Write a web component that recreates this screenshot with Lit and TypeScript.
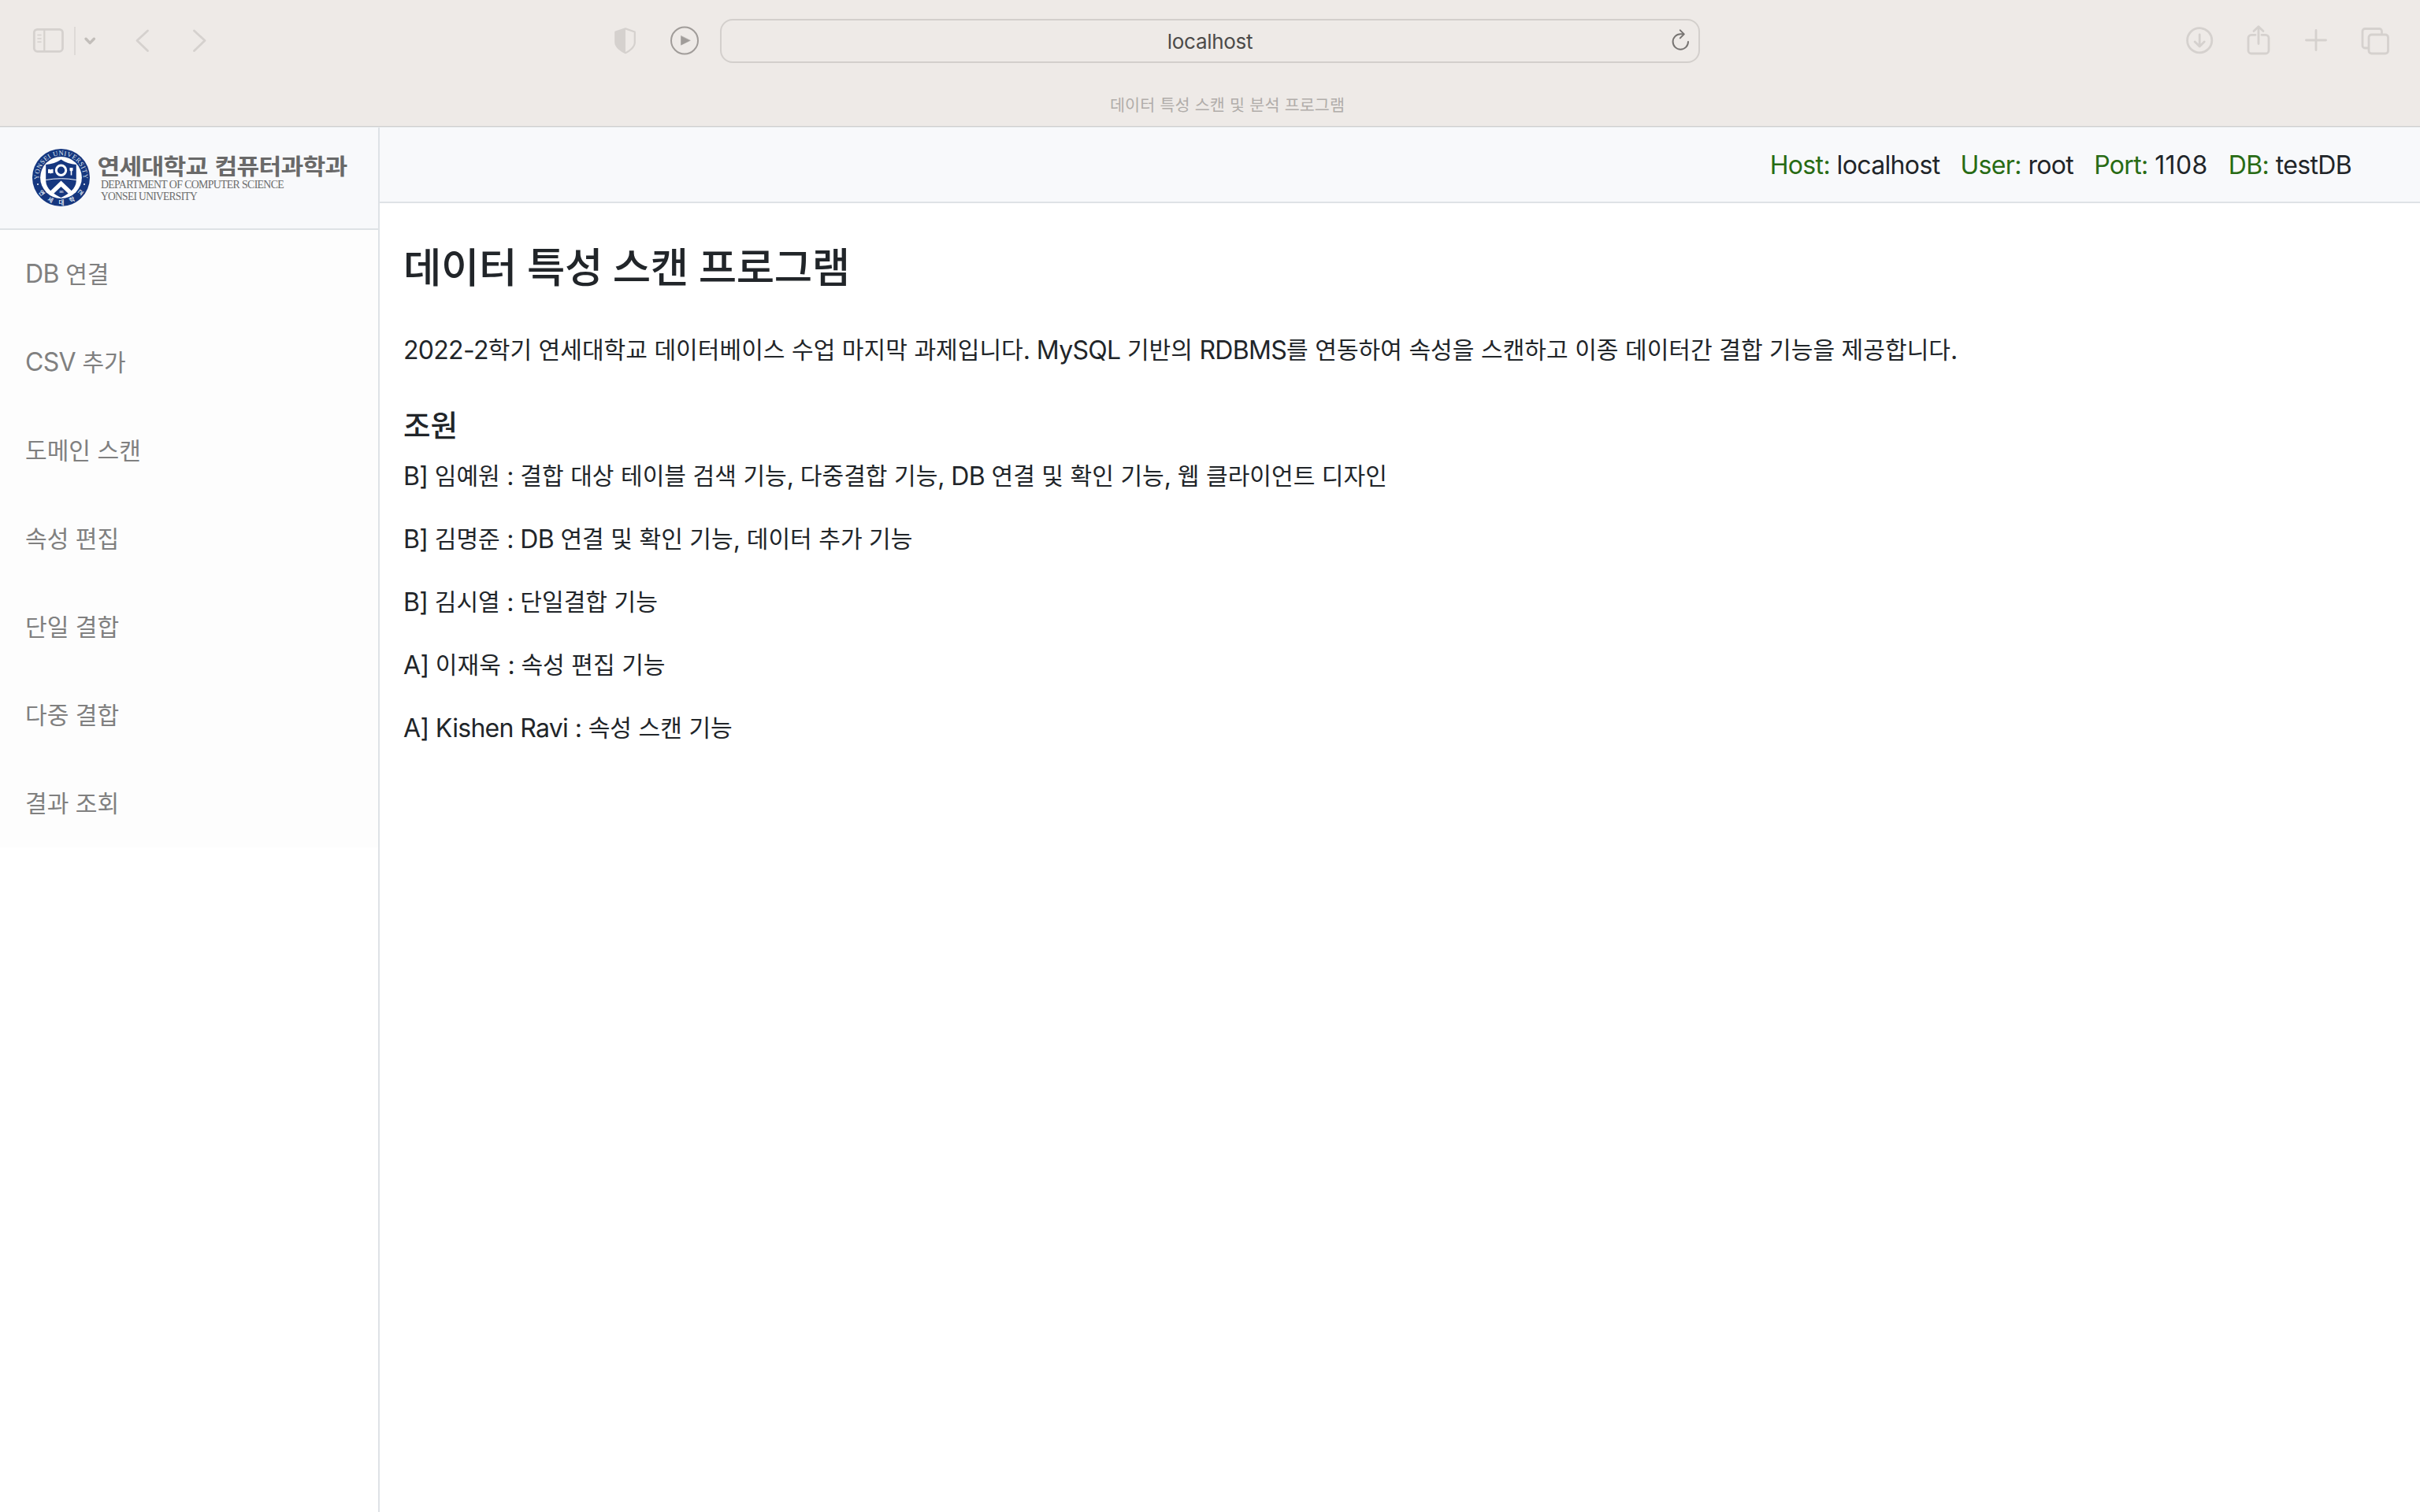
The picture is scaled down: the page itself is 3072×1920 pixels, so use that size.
import { LitElement, html, svg, css } from "lit";
import { customElement } from "lit/decorators.js";

/** Splits mixed text so that Hangul runs get their own optical size. */
const mixed = (text: string) =>
  text
    .split(/([\uAC00-\uD7A3]+)/)
    .filter((part) => part !== "")
    .map((part) => (/[\uAC00-\uD7A3]/.test(part) ? html`<span class="ko">${part}</span>` : part));

const sharedText = css`
  .ko {
    font-family: "Noto Sans CJK KR", sans-serif;
    font-size: 0.94em;
    line-height: 0;
    letter-spacing: 0;
  }
`;

@customElement("browser-bar")
class BrowserBar extends LitElement {
  static styles = [
    sharedText,
    css`
      :host {
        display: block;
        box-sizing: border-box;
        height: 162px;
        background: #eeeae7;
        border-bottom: 1px solid #e6e9eb;
        box-shadow: inset 0 -1px 0 #d0cfcf;
        color: #d5d1ce;
      }
      .toolbar {
        display: grid;
        grid-template-columns: 914px 1244px 1fr;
        height: 104px;
        align-items: center;
      }
      svg {
        display: block;
        flex: none;
        fill: none;
        stroke: currentColor;
        stroke-width: 2.8;
        stroke-linecap: round;
        stroke-linejoin: round;
      }
      .left,
      .right {
        display: flex;
        align-items: center;
      }
      .left {
        padding-left: 40px;
      }
      .right {
        justify-content: flex-end;
        padding-right: 35px;
        gap: 34px;
      }
      .divider {
        width: 2px;
        height: 36px;
        margin: 0 9px 0 12px;
        background: #dedad7;
      }
      .small {
        color: #c2beba;
        stroke-width: 3.4;
      }
      .back {
        margin-left: 42px;
      }
      .forward {
        margin-left: 32px;
      }
      .shield {
        margin-left: auto;
      }
      .play {
        margin: 0 26px 0 42px;
        color: #a09c99;
        stroke-width: 2;
      }
      .address {
        box-sizing: border-box;
        display: grid;
        grid-template-columns: 36px 1fr 36px;
        align-items: center;
        height: 56px;
        border: 2px solid #d3cfcc;
        border-radius: 16px;
      }
      .url {
        grid-column: 2;
        padding-top: 2px;
        text-align: center;
        font: 26px/32px Inter, sans-serif;
        letter-spacing: -0.3px;
        color: #4c4a49;
      }
      .reload {
        color: #777472;
        stroke-width: 2;
      }
      .tab {
        display: flex;
        justify-content: center;
        padding-left: 44px;
        font: 22px/58px Inter, sans-serif;
        letter-spacing: -0.2px;
        color: #b1adaa;
      }
      .tab .ko {
        letter-spacing: 0.05px;
      }
    `,
  ];

  render() {
    return html`
      <div class="toolbar">
        <div class="left">
          <svg width="42" height="34" viewBox="0 0 42 34">
            <rect x="3.3" y="2.3" width="36.2" height="28" rx="4" />
            <path d="M16.3 2.5V30" stroke-width="2.2" />
            <path d="M8 9.5h4M8 14h4M8 18.3h4" stroke-width="1.6" />
          </svg>
          <span class="divider"></span>
          <svg class="small" width="18" height="18" viewBox="0 0 18 18">
            <path d="M4 6.2L9.2 11.6L14.4 6.2" />
          </svg>
          <svg class="back" width="32" height="34" viewBox="0 0 32 34">
            <path d="M22.5 4L9 16.5L22.5 29.5" />
          </svg>
          <svg class="forward" width="40" height="34" viewBox="0 0 40 34">
            <path d="M17.5 4L31 16.5L17.5 29.5" />
          </svg>
          <svg class="shield" width="28" height="36" viewBox="0 0 28 36">
            <path
              d="M14 2.4L25.8 6.5V20C25.8 26 18 31.5 14 33.2C10 31.5 1.3 26 1.3 20V6.5Z"
              stroke-width="2.2"
            />
            <path d="M14 2.4V33.2C10 31.5 1.3 26 1.3 20V6.5Z" fill="currentColor" stroke="none" />
          </svg>
          <svg class="play" width="38" height="38" viewBox="0 0 38 38">
            <circle cx="19" cy="18.5" r="17" />
            <path d="M14.5 12.8V24.2L26 18.5Z" fill="currentColor" stroke-width="0.6" />
          </svg>
        </div>
        <div class="address">
          <span class="url">localhost</span>
          <svg class="reload" width="28" height="32" viewBox="0 0 28 32">
            <path d="M23 17A9.7 9.7 0 1 1 13.3 7.3H17" />
            <path d="M12.8 2.4L17.8 7.4L12.8 12.4" />
          </svg>
        </div>
        <div class="right">
          <svg width="38" height="38" viewBox="0 0 38 38">
            <circle cx="17.200" cy="18.300" r="15.600" />
            <path d="M17.200 10.800V25.800M11.200 20.100L17.200 26L23.200 20.100" />
          </svg>
          <svg width="44" height="42" viewBox="0 0 44 42">
            <path
              d="M16 13.3H11A4 4 0 0 0 7 17.300V33A4 4 0 0 0 11 37H29A4 4 0 0 0 33 33V17.300A4 4 0 0 0 29 13.300H24"
            />
            <path d="M20 24.500V3.500M14 8.500L20 2.700L26 8.500" />
          </svg>
          <svg width="36" height="34" viewBox="0 0 36 34">
            <path d="M15 3.500V28.500M2.500 16H27.500" />
          </svg>
          <svg width="42" height="38" viewBox="0 0 42 38">
            <rect x="12" y="11" width="24.500" height="24" rx="3.500" />
            <path d="M28.500 10.500V6.500A3 3 0 0 0 25.500 3.500H7A3 3 0 0 0 4 6.500V25A3 3 0 0 0 7 28H11.500" />
          </svg>
        </div>
      </div>
      <div class="tab"><span>${mixed("데이터 특성 스캔 및 분석 프로그램")}</span></div>
    `;
  }
}

@customElement("department-logo")
class DepartmentLogo extends LitElement {
  static styles = css`
    :host {
      display: block;
    }
    svg {
      display: block;
    }
    .navy {
      fill: #16377f;
    }
    .white {
      fill: #fff;
    }
    .stroke {
      fill: none;
      stroke: #fff;
    }
    .ring {
      fill: #dfe5f1;
      font: 8.6px "Liberation Serif", serif;
    }
    .ring-ko {
      fill: #dfe5f1;
      font: 700 7.5px "Noto Sans CJK KR", sans-serif;
    }
    .name {
      fill: #696969;
      font: 700 28px "Noto Sans CJK KR", sans-serif;
    }
    .dept {
      fill: #6c6c6c;
      font: 14px "Liberation Serif", serif;
    }
    .year {
      fill: #b9c4dc;
      font: 700 4px "Liberation Serif", serif;
    }
  `;

  render() {
    const letters = ["연", "세", "대", "학", "교"];
    return html`
      <svg width="410" height="80" viewBox="36 186 410 80">
        <g transform="translate(77.5 225.5)">
          <circle class="navy" r="36.5" />
          <circle class="white" r="26.4" />
          <path id="arc" fill="none" d="M-28.1 3.500A28.300 28.300 0 1 1 28.100 3.500" />
          <text class="ring" textLength="92">
            <textPath href="#arc" startOffset="1" textLength="92">YONSEI UNIVERSITY</textPath>
          </text>
          ${letters.map(
            (letter, i) => svg`<text class="ring-ko" text-anchor="middle"
              transform=${`rotate(${(2 - i) * 26})`} y="34">${letter}</text>`
          )}
          <circle class="white" cx="-29.500" cy="8.500" r="1" />
          <circle class="white" cx="29.500" cy="8.500" r="1" />
          <path
            class="navy"
            d="M0 -23C5 -19.500 12 -17 19.300 -16.500V4C19.300 14 9 21.500 0 25.500C-9 21.500 -19.300 14 -19.300 4V-16.500C-12 -17 -5 -19.500 0 -23Z"
          />
          <path class="stroke" stroke-width="1" d="M-19.300 3Q0 -0.500 19.300 3" />
          <circle class="stroke" stroke-width="3" cy="-9.300" r="6.200" />
          <path class="white" d="M-16.500 -10.500Q-14.500 -11 -13.300 -10Q-12 -11 -10 -10.500V-5.500Q-12 -6 -13.300 -5Q-14.500 -6 -16.500 -5.500Z" />
          <path class="white" d="M11 -12.500H15V-9L13.800 -8V-3H12.200V-8L11 -9Z" />
          <path class="white" d="M0 4L13.500 17L9.500 20.500L0 11.500L-9.500 20.500L-13.500 17Z" />
          <text class="year" text-anchor="middle" y="19.500">1885</text>
        </g>
        <text class="name" x="123.500" y="221.500" textLength="140" lengthAdjust="spacingAndGlyphs">연세대학교</text>
        <text class="name" x="272.500" y="221.500" textLength="168" lengthAdjust="spacingAndGlyphs">컴퓨터과학과</text>
        <text class="dept" x="128" y="239" textLength="232" lengthAdjust="spacingAndGlyphs">DEPARTMENT OF COMPUTER SCIENCE</text>
        <text class="dept" x="128" y="253.500" textLength="122" lengthAdjust="spacingAndGlyphs">YONSEI UNIVERSITY</text>
      </svg>
    `;
  }
}

@customElement("app-root")
class AppRoot extends LitElement {
  static styles = [
    sharedText,
    css`
      :host {
        display: flex;
        flex-direction: column;
        height: 1920px;
        overflow: hidden;
        background: #fff;
        color: #212529;
        font: 32px/48px Inter, "Noto Sans CJK KR", sans-serif;
        letter-spacing: -0.7px;
        word-spacing: 0.2px;
      }
      .page {
        flex: 1;
        display: grid;
        grid-template-columns: 480px 1fr;
      }
      .sidebar {
        border-right: 2px solid #dee2e6;
        width: 480px;
      }
      .brand {
        box-sizing: border-box;
        height: 130px;
        padding: 24px 0 0 36px;
        background: #f8f9fb;
        border-bottom: 2px solid #dee2e6;
      }
      .nav {
        background: #fdfdfd;
        color: #808080;
      }
      .item {
        padding: 32px;
      }
      .main {
        margin-left: 2px;
      }
      .status {
        box-sizing: border-box;
        display: flex;
        justify-content: flex-end;
        gap: 26px;
        height: 96px;
        padding: 24px 87px 0 0;
        background: #f8f9fb;
        border-bottom: 2px solid #dee2e6;
        letter-spacing: -0.65px;
      }
      .key {
        color: #286b14;
      }
      .digits {
        letter-spacing: 0.4px;
      }
      .content {
        padding: 48px 30px;
      }
      h2 {
        margin: 0 0 48px;
        font-size: 56px;
        font-weight: 500;
        line-height: 67px;
        word-spacing: -1.4px;
      }
      h2 .ko {
        letter-spacing: -0.4px;
      }
      h5 {
        margin: 47px 0 17px;
        font-size: 40px;
        font-weight: 500;
        line-height: 48px;
      }
      p {
        margin: 0 0 32px;
      }
      p .ko {
        vertical-align: 0.02em;
      }
    `,
  ];

  private menu = ["DB 연결", "CSV 추가", "도메인 스캔", "속성 편집", "단일 결합", "다중 결합", "결과 조회"];

  private connection = [
    ["Host:", "localhost"],
    ["User:", "root"],
    ["Port:", "1108"],
    ["DB:", "testDB"],
  ];

  private members = [
    "B] 임예원 : 결합 대상 테이블 검색 기능, 다중결합 기능, DB 연결 및 확인 기능, 웹 클라이언트 디자인",
    "B] 김명준 : DB 연결 및 확인 기능, 데이터 추가 기능",
    "B] 김시열 : 단일결합 기능",
    "A] 이재욱 : 속성 편집 기능",
    "A] Kishen Ravi : 속성 스캔 기능",
  ];

  render() {
    return html`
      <browser-bar></browser-bar>
      <div class="page">
        <div class="sidebar">
          <div class="brand"><department-logo></department-logo></div>
          <nav class="nav">${this.menu.map((label) => html`<div class="item">${mixed(label)}</div>`)}</nav>
        </div>
        <div class="main">
          <div class="status">
            ${this.connection.map(
              ([key, value]) =>
                html`<span><span class="key">${key}</span> <span class=${/^\d+$/.test(value) ? "digits" : "value"}>${value}</span></span>`
            )}
          </div>
          <div class="content">
            <h2>${mixed("데이터 특성 스캔 프로그램")}</h2>
            <p>${mixed("2022-2학기 연세대학교 데이터베이스 수업 마지막 과제입니다. MySQL 기반의 RDBMS를 연동하여 속성을 스캔하고 이종 데이터간 결합 기능을 제공합니다.")}</p>
            <h5>${mixed("조원")}</h5>
            ${this.members.map((line) => html`<p>${mixed(line)}</p>`)}
          </div>
        </div>
      </div>
    `;
  }
}
